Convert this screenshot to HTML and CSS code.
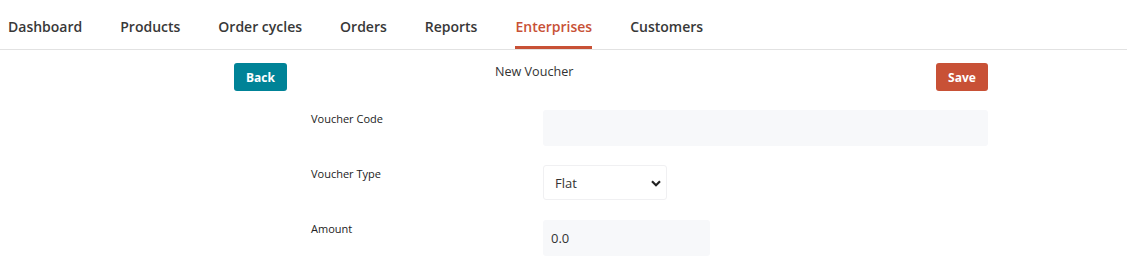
FILE: index.html
```html
<!DOCTYPE html>
<html lang="en">
<head>
  <meta charset="UTF-8" />
  <title>New Voucher</title>
  <link rel="stylesheet" href="styles.css">
</head>
<body>
  <nav class="main-nav">
    <a href="#">Dashboard</a>
    <a href="#">Products</a>
    <a href="#">Order cycles</a>
    <a href="#">Orders</a>
    <a href="#">Reports</a>
    <a href="#" class="active">Enterprises</a>
    <a href="#">Customers</a>
  </nav>

  <div class="page">
    <div class="page-header">
      <button class="btn btn-back">Back</button>
      <h1 class="title">New Voucher</h1>
      <button class="btn btn-save">Save</button>
    </div>

    <form class="voucher-form">
      <div class="row">
        <label for="code">Voucher Code</label>
        <input type="text" id="code" class="field field-wide" />
      </div>
      <div class="row">
        <label for="type">Voucher Type</label>
        <div class="select-wrap">
          <select id="type" class="field-select">
            <option>Flat</option>
            <option>Percentage</option>
          </select>
          <svg class="chevron" width="10" height="7" viewBox="0 0 10 7"><path d="M1 1.2 L5 5.2 L9 1.2" fill="none" stroke="#222" stroke-width="2.2"/></svg>
        </div>
      </div>
      <div class="row">
        <label for="amount">Amount</label>
        <input type="text" id="amount" class="field field-amount" value="0.0" />
      </div>
    </form>
  </div>
</body>
</html>
```

FILE: styles.css
```css
body {
  margin: 0;
  font-family: 'Open Sans', sans-serif;
  color: #333;
  background: #fff;
}

.main-nav {
  display: flex;
  gap: 38px;
  padding: 0 8px;
  height: 49px;
  border-bottom: 1px solid #e2e2e2;
}

.main-nav a {
  display: flex;
  align-items: center;
  box-sizing: border-box;
  height: 49px;
  padding-top: 8px;
  padding-bottom: 1px;
  font-size: 14px;
  font-weight: 600;
  color: #383838;
  text-decoration: none;
  border-bottom: 3px solid transparent;
}

.main-nav a.active {
  color: #c85136;
  border-bottom-color: #c85136;
}

.page {
  margin-left: 234px;
  width: 754px;
  padding-top: 13px;
}

.page-header {
  display: flex;
  align-items: flex-start;
}

.btn {
  height: 28px;
  padding: 0 12px;
  border: none;
  border-radius: 3px;
  color: #fff;
  font-family: 'Open Sans', sans-serif;
  font-size: 12px;
  font-weight: 700;
  cursor: pointer;
}

.btn-back {
  background: #008397;
  width: 53px;
}

.btn-save {
  background: #c85136;
  width: 52px;
  margin-left: auto;
}

.title {
  margin: 0 0 0 208px;
  font-size: 12.6px;
  font-weight: 400;
  line-height: 18px;
  color: #333;
}

.voucher-form {
  padding-left: 77px;
  margin-top: 19px;
}

.row {
  display: flex;
  align-items: flex-start;
  min-height: 36px;
  margin-bottom: 19px;
}

.row label {
  width: 232px;
  flex-shrink: 0;
  padding-top: 1px;
  font-size: 11px;
  font-weight: 500;
  line-height: 16px;
  color: #222;
}

.field {
  height: 36px;
  box-sizing: border-box;
  padding: 0 8px;
  border: none;
  border-radius: 3px;
  background: #f7f8fa;
  font-family: 'Open Sans', sans-serif;
  font-size: 13px;
  color: #333;
}

.field-wide {
  flex: 1;
}

.field-amount {
  width: 167px;
}

.select-wrap {
  position: relative;
  width: 124px;
  height: 35px;
}

.field-select {
  appearance: none;
  width: 100%;
  height: 100%;
  box-sizing: border-box;
  padding: 0 11px;
  border: 1px solid #f0f0f2;
  border-radius: 3px;
  background: #fff;
  font-family: 'Open Sans', sans-serif;
  font-size: 13px;
  color: #333;
}

.chevron {
  position: absolute;
  right: 6px;
  top: 15px;
  pointer-events: none;
}
```
